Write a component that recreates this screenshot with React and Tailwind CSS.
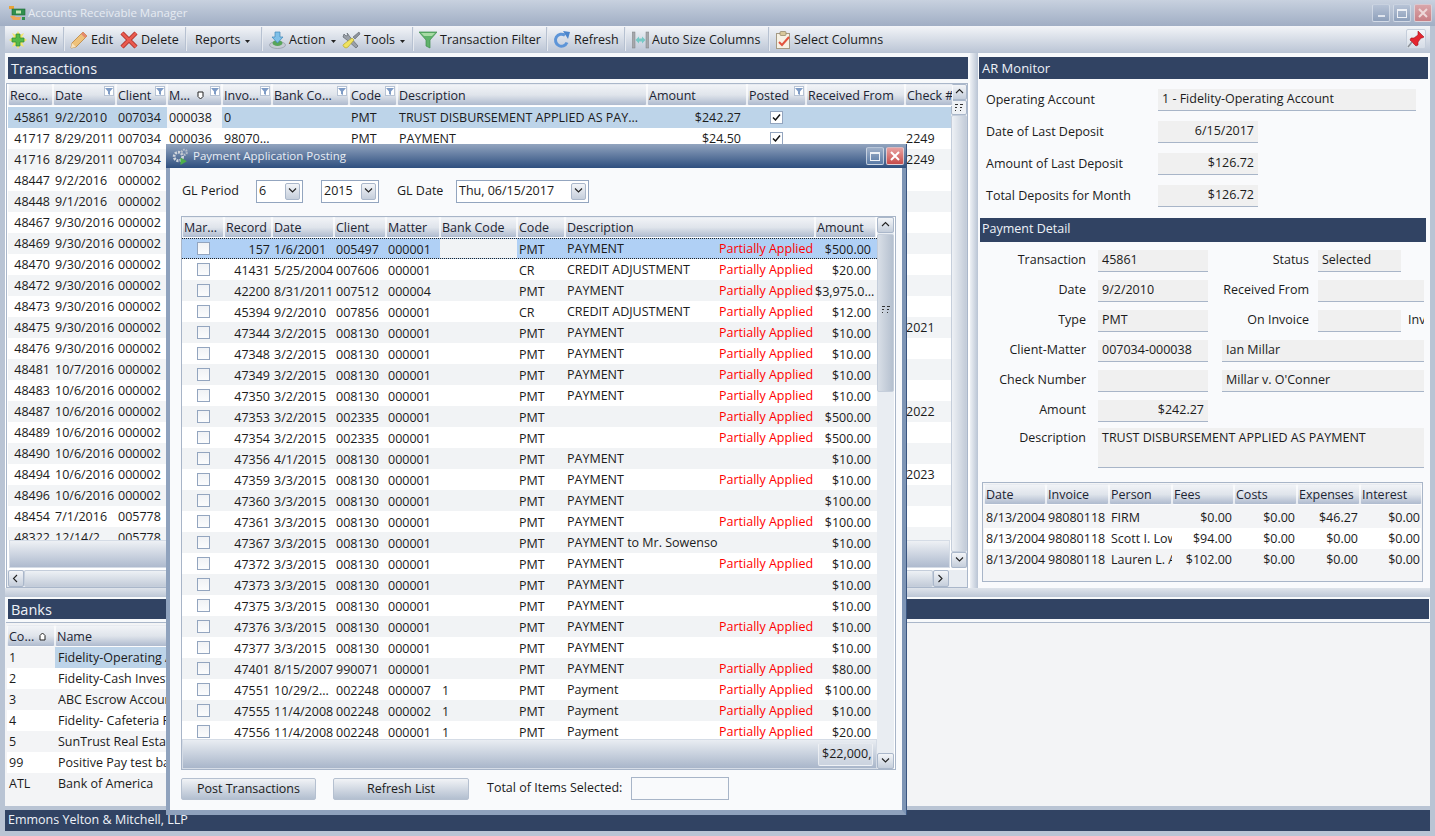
import React from 'react';

const mainCols = 'grid-cols-[45px_63px_51px_55px_50px_77px_48px_250px_100px_59px_99px_48px]';
const modalCols = 'grid-cols-[42px_48px_62px_52px_54px_77px_48px_152px_98px_61px]';
const bankCols = 'grid-cols-[48px_1fr]';
const subCols = 'grid-cols-[62px_63px_63px_62px_63px_63px_62px]';

const headCell = 'h-full flex items-center px-[1px] pt-[2px] rounded-[2px] border border-white/70 bg-linear-to-b from-[#f1f3f7] via-[#dfe4eb] to-[#aebace] text-[#1c2433] overflow-hidden whitespace-nowrap relative';

function FilterMark() {
  return (
    <span className="absolute right-[1px] top-[1px] w-[10px] h-[10px] bg-white border border-[#b7c3d4] flex items-center justify-center">
      <svg width="8" height="8" viewBox="0 0 8 8"><path d="M0 1h8L5 4.5V8L3 7V4.5z" fill="#7f9cc6" /></svg>
    </span>
  );
}

function SortMark() {
  return (
    <svg width="7" height="9" viewBox="0 0 7 9" className="absolute right-[17px] top-[6px]">
      <path d="M1 1h5v4.5L3.5 8 1 5.5z" fill="#fff" stroke="#222" strokeWidth="1" />
    </svg>
  );
}

function SortUp({ className }) {
  return (
    <svg width="7" height="9" viewBox="0 0 7 9" className={className}>
      <path d="M1 8V3.5L3.5 1 6 3.5V8z" fill="#fff" stroke="#222" strokeWidth="1" />
    </svg>
  );
}

function Check({ on }) {
  return (
    <span className={`w-[13px] h-[13px] border border-[#93a5bf] flex items-center justify-center ${on ? 'bg-white' : 'bg-linear-to-b from-[#f0f2f5] to-[#fbfcfd]'}`}>
      {on && <svg width="9" height="9" viewBox="0 0 9 9"><path d="M1 4.5 3.5 7 8 1.5" fill="none" stroke="#111" strokeWidth="1.5" /></svg>}
    </span>
  );
}

function Grip() {
  return (
    <svg width="8" height="7" viewBox="0 0 8 7"><path d="M0 0h3v1H0zM5 0h3v1H5zM0 3h2v1H0zM5 3h2v1H5zM0 6h1v1H0zM5 6h1v1H5z" fill="#333" /></svg>
  );
}

function ScrollBtn({ dir, className = '' }) {
  const d = { up: 'M1 5l3.5-3.5L8 5', down: 'M1 1.5L4.5 5 8 1.5', left: 'M5 1L1.5 4.5 5 8', right: 'M1.5 1L5 4.5 1.5 8' }[dir];
  return (
    <span className={`flex items-center justify-center rounded-[2px] border border-[#aab7ca] bg-linear-to-b from-[#f3f5f8] to-[#c5cedb] shrink-0 ${className}`}>
      <svg width="9" height="9" viewBox="0 0 9 9"><path d={d} fill="none" stroke="#222" strokeWidth="1.1" /></svg>
    </span>
  );
}

function Caret() {
  return <svg width="5" height="3" viewBox="0 0 5 3" className="ml-[5px] mt-[1px]"><path d="M0 0h5L2.5 3z" fill="#222" /></svg>;
}

function ToolSep() {
  return <span className="w-[2px] h-[24px] -mt-[3px] bg-linear-to-r from-[#9fadc2] to-white shrink-0" />;
}

function IconNew() {
  return (
    <svg width="18" height="18" viewBox="0 0 18 18" className="-mt-[2px]">
      <path d="M9 0l2 4 4-2-2 4 5 3-5 3 2 4-4-2-2 4-2-4-4 2 2-4-5-3 5-3-2-4 4 2z" fill="#f4e66a" />
      <path d="M7 3h4v4h4v4h-4v4H7v-4H3V7h4z" fill="#54b948" stroke="#2f8a36" strokeWidth=".7" />
    </svg>
  );
}
function IconEdit() {
  return (
    <svg width="18" height="18" viewBox="0 0 18 18" className="-mt-[2px]">
      <path d="M13 1l4 4L6 16l-5 1 1-5z" fill="#efc27a" stroke="#b9843d" strokeWidth=".8" />
      <path d="M13 1l4 4-2 2-4-4z" fill="#e58a6e" />
      <path d="M2 12l4 4-5 1z" fill="#f8e3c0" />
    </svg>
  );
}
function IconDelete() {
  return (
    <svg width="18" height="18" viewBox="0 0 18 18" className="-mt-[2px]">
      <path d="M2 2l14 14M16 2L2 16" stroke="#a8302a" strokeWidth="4.4" />
      <path d="M2 2l14 14M16 2L2 16" stroke="#ea5a4e" strokeWidth="2.8" />
    </svg>
  );
}
function IconAction() {
  return (
    <svg width="17" height="18" viewBox="0 0 17 18" className="-mt-[2px]">
      <ellipse cx="8.5" cy="14" rx="8" ry="3.5" fill="#c6ccd4" stroke="#8f98a5" strokeWidth=".7" />
      <ellipse cx="8.5" cy="12" rx="5" ry="3" fill="#58a55a" />
      <path d="M6 1h5v5h3l-5.5 6L3 6h3z" fill="#7fc0e8" stroke="#3f86b8" strokeWidth=".7" />
    </svg>
  );
}
function IconTools() {
  return (
    <svg width="19" height="18" viewBox="0 0 19 18" className="-mt-[2px]">
      <path d="M5 2l3 4 8 9-2 2-9-8-4-3 1-3 2 2 2-1z" fill="#9aa0a8" stroke="#5f656d" strokeWidth=".7" />
      <path d="M17 1l1 2-5 5-2-2z" fill="#8d939b" stroke="#5f656d" strokeWidth=".6" />
      <path d="M10 7l2 2-6 7q-2 2-4 0t0-3z" fill="#f0e25f" stroke="#b5a82c" strokeWidth=".7" />
    </svg>
  );
}
function IconFilter() {
  return (
    <svg width="18" height="18" viewBox="0 0 18 18" className="-mt-[2px]">
      <path d="M0 1h18l-7 8v8l-4-2V9z" fill="#5fb26b" stroke="#3f8c4d" strokeWidth=".7" />
      <path d="M2 2h14l-3 3H5z" fill="#a8dba5" />
    </svg>
  );
}
function IconRefresh() {
  return (
    <svg width="18" height="18" viewBox="0 0 18 18" className="-mt-[2px]">
      <path d="M14 11.5A6 6 0 1 1 12 4.3" fill="none" stroke="#5d95d8" strokeWidth="3" />
      <path d="M10 0l7 1-2 7z" fill="#4d86cc" />
    </svg>
  );
}
function IconAuto() {
  return (
    <svg width="17" height="18" viewBox="0 0 17 18" className="-mt-[2px]">
      <rect x="0" y="1" width="3" height="16" fill="#a6a8ac" stroke="#7d8085" strokeWidth=".5" />
      <rect x="14" y="1" width="3" height="16" fill="#a6a8ac" stroke="#7d8085" strokeWidth=".5" />
      <path d="M3.5 9L7 5.5v2h3v-2L13.5 9 10 12.5v-2H7v2z" fill="#76c9c6" />
    </svg>
  );
}
function IconColumns() {
  return (
    <svg width="15" height="18" viewBox="0 0 15 18" className="-mt-[2px]">
      <rect x=".5" y="2.5" width="13" height="15" fill="#f6f1e4" stroke="#a59a84" />
      <rect x="4" y="0.5" width="6" height="4" rx="1" fill="#d8c89a" stroke="#8f8364" strokeWidth=".7" />
      <path d="M3 11l3 3 7-8" fill="none" stroke="#e2543f" strokeWidth="2" />
    </svg>
  );
}
function IconPin() {
  return (
    <svg width="18" height="18" viewBox="0 0 18 18">
      <path d="M11 1l6 6-2 1-1 0-3 4 0 3-2 1-6-6 1-2 3 0 4-3 0-1z" fill="#e4252f" stroke="#a11119" strokeWidth=".6" />
      <path d="M5 12l-4 5" stroke="#8a8f96" strokeWidth="1.4" />
    </svg>
  );
}
function IconApp() {
  return (
    <svg width="18" height="18" viewBox="0 0 18 18">
      <rect x="1" y="2" width="5" height="3" fill="#e8a33a" />
      <rect x="4" y="5" width="13" height="6" fill="#2f8f4e" stroke="#1c6a35" strokeWidth=".6" />
      <rect x="8" y="6.5" width="5" height="3" fill="#c4e4b0" />
      <path d="M2 12q4-1 6 1l5 0-1 3H5z" fill="#eea75a" />
      <rect x="14" y="13" width="3" height="3" fill="#2f8f4e" />
    </svg>
  );
}
function IconGears() {
  return (
    <svg width="17" height="17" viewBox="0 0 16 16">
      <circle cx="6" cy="8" r="4" fill="none" stroke="#cfd4dc" strokeWidth="2.6" strokeDasharray="2 1" />
      <circle cx="11.5" cy="4" r="2.4" fill="none" stroke="#b9c0cb" strokeWidth="2" strokeDasharray="1.5 1" />
      <path d="M8 9l6 3.5L8 16z" fill="#4eb04a" />
    </svg>
  );
}

function ToolBtn({ icon, children, caret, className = '' }) {
  return (
    <span className={`flex items-center h-full whitespace-nowrap ${className}`}>
      {icon}
      <span className={icon ? 'ml-[3px]' : ''}>{children}</span>
      {caret && <Caret />}
    </span>
  );
}

function WinBtn({ kind, active }) {
  const close = kind === 'close';
  const tone = close
    ? active ? 'from-[#e8a0a0] to-[#c64a4a]' : 'from-[#d9a6aa] to-[#c87f85]'
    : active ? 'from-[#9fb0c8] to-[#5b7ba6]' : 'from-[#b7c3d6] to-[#8ea0bb]';
  return (
    <span className={`w-[18px] h-[18px] rounded-[2px] border border-[#dfe5ee]/70 bg-linear-to-b ${tone} flex items-center justify-center`}>
      {kind === 'min' && <span className="w-[7px] h-[2px] mt-[6px] bg-[#dfe5ee]" />}
      {kind === 'max' && <span className="w-[10px] h-[9px] border border-[#eef1f6] border-t-2" />}
      {close && (
        <svg width="10" height="10" viewBox="0 0 10 10"><path d="M1 1l8 8M9 1L1 9" stroke={active ? '#fff' : '#eed9da'} strokeWidth="2" /></svg>
      )}
    </span>
  );
}

function Band({ children, className = '' }) {
  return <div className={`bg-[#314363] text-[#eef2f8] flex items-center whitespace-nowrap ${className}`}>{children}</div>;
}

const txRows = [
  ['41717', '8/29/2011', '007034', '000036', '98070...', '', 'PMT', 'PAYMENT', '$24.50', true, '', '2249'],
  ['41716', '8/29/2011', '007034', '', '', '', '', '', '', false, '', '2249'],
  ['48447', '9/2/2016', '000002'], ['48448', '9/1/2016', '000002'], ['48467', '9/30/2016', '000002'],
  ['48469', '9/30/2016', '000002'], ['48470', '9/30/2016', '000002'], ['48472', '9/30/2016', '000002'],
  ['48473', '9/30/2016', '000002'],
  ['48475', '9/30/2016', '000002', '', '', '', '', '', '', false, '', '2021'],
  ['48476', '9/30/2016', '000002'], ['48481', '10/7/2016', '000002'], ['48483', '10/6/2016', '000002'],
  ['48487', '10/6/2016', '000002', '', '', '', '', '', '', false, '', '2022'],
  ['48489', '10/6/2016', '000002'], ['48490', '10/6/2016', '000002'],
  ['48494', '10/6/2016', '000002', '', '', '', '', '', '', false, '', '2023'],
  ['48496', '10/6/2016', '000002'], ['48454', '7/1/2016', '005778'], ['48322', '12/14/2', '005778'],
];

const P = 'Partially Applied';
const payRows = [
  ['41431', '5/25/2004', '007606', '000001', '', 'CR', 'CREDIT ADJUSTMENT', P, '$20.00'],
  ['42200', '8/31/2011', '007512', '000004', '', 'PMT', 'PAYMENT', P, '$3,975.0...'],
  ['45394', '9/2/2010', '007856', '000001', '', 'CR', 'CREDIT ADJUSTMENT', P, '$12.00'],
  ['47344', '3/2/2015', '008130', '000001', '', 'PMT', 'PAYMENT', P, '$10.00'],
  ['47348', '3/2/2015', '008130', '000001', '', 'PMT', 'PAYMENT', P, '$10.00'],
  ['47349', '3/2/2015', '008130', '000001', '', 'PMT', 'PAYMENT', P, '$10.00'],
  ['47350', '3/2/2015', '008130', '000001', '', 'PMT', 'PAYMENT', P, '$10.00'],
  ['47353', '3/2/2015', '002335', '000001', '', 'PMT', '', P, '$500.00'],
  ['47354', '3/2/2015', '002335', '000001', '', 'PMT', '', P, '$500.00'],
  ['47356', '4/1/2015', '008130', '000001', '', 'PMT', 'PAYMENT', '', '$10.00'],
  ['47359', '3/3/2015', '008130', '000001', '', 'PMT', 'PAYMENT', P, '$10.00'],
  ['47360', '3/3/2015', '008130', '000001', '', 'PMT', 'PAYMENT', '', '$100.00'],
  ['47361', '3/3/2015', '008130', '000001', '', 'PMT', 'PAYMENT', P, '$100.00'],
  ['47367', '3/3/2015', '008130', '000001', '', 'PMT', 'PAYMENT to Mr. Sowenso', '', '$10.00'],
  ['47372', '3/3/2015', '008130', '000001', '', 'PMT', 'PAYMENT', P, '$10.00'],
  ['47373', '3/3/2015', '008130', '000001', '', 'PMT', 'PAYMENT', '', '$10.00'],
  ['47375', '3/3/2015', '008130', '000001', '', 'PMT', 'PAYMENT', '', '$10.00'],
  ['47376', '3/3/2015', '008130', '000001', '', 'PMT', 'PAYMENT', P, '$10.00'],
  ['47377', '3/3/2015', '008130', '000001', '', 'PMT', 'PAYMENT', '', '$10.00'],
  ['47401', '8/15/2007', '990071', '000001', '', 'PMT', 'PAYMENT', P, '$80.00'],
  ['47551', '10/29/2...', '002248', '000007', '1', 'PMT', 'Payment', P, '$100.00'],
  ['47555', '11/4/2008', '002248', '000002', '1', 'PMT', 'Payment', P, '$10.00'],
  ['47556', '11/4/2008', '002248', '000001', '1', 'PMT', 'Payment', P, '$20.00'],
];

const banks = [
  ['1', 'Fidelity-Operating Account'], ['2', 'Fidelity-Cash Investment'], ['3', 'ABC Escrow Account'],
  ['4', 'Fidelity- Cafeteria Plan'], ['5', 'SunTrust Real Estate'], ['99', 'Positive Pay test bank'], ['ATL', 'Bank of America'],
];

const subRows = [
  ['8/13/2004', '98080118', 'FIRM', '$0.00', '$0.00', '$46.27', '$0.00'],
  ['8/13/2004', '98080118', 'Scott I. Lowe', '$94.00', '$0.00', '$0.00', '$0.00'],
  ['8/13/2004', '98080118', 'Lauren L. Adams', '$102.00', '$0.00', '$0.00', '$0.00'],
];

function cell(extra = '') {
  return `px-[2px] overflow-hidden whitespace-nowrap ${extra}`;
}

// numbers in the posting grid sit a pixel lower than the description text
function numCell(extra = '') {
  return cell(`pt-[1px] ${extra}`);
}

function TransactionsPanel() {
  const heads = [['Reco...'], ['Date', 1], ['Client', 1], ['M...', 1, 1], ['Invo...', 1], ['Bank Co...', 1], ['Code', 1], ['Description'], ['Amount'], ['Posted', 1], ['Received From'], ['Check #']];
  return (
    <div className="w-[965px] h-full bg-white flex flex-col">
      <div className="pl-[3px] pr-[2px] pt-[4px] pb-[4px] bg-[#f7f9fb]">
        <Band className="h-[22px] pl-[3px] pt-[1px] text-[14.5px]">Transactions</Band>
      </div>
      <div className="flex-1 min-h-0 flex flex-col border border-[#aab7ca] ml-[1px] mr-[2px]">
        <div className="flex flex-1 min-h-0">
          <div className="flex-1 min-w-0 flex flex-col pl-[1px]">
            <div className={`grid ${mainCols} h-[22px] shrink-0 mb-[1px]`}>
              {heads.map(([t, f, s]) => (
                <div key={t} className={headCell}>{t}{s && <SortMark />}{f && <FilterMark />}</div>
              ))}
            </div>
            <div className="flex-1 min-h-0 overflow-hidden">
              <div className={`grid ${mainCols} h-[21px] leading-[21px] bg-[#bdd4e9]`}>
                <div className={cell('text-right pr-[3px]')}>45861</div>
                <div className={cell()}>9/2/2010</div>
                <div className={cell()}>007034</div>
                <div className={cell('bg-[#f3f5f8]')}>000038</div>
                <div className={cell()}>0</div>
                <div />
                <div className={cell()}>PMT</div>
                <div className={cell()}>TRUST DISBURSEMENT APPLIED AS PAY...</div>
                <div className={cell('text-right pr-[6px]')}>$242.27</div>
                <div className="flex items-center justify-center"><Check on /></div>
                <div />
                <div />
              </div>
              {txRows.map((r, i) => (
                <div key={r[0]} className={`grid ${mainCols} h-[21px] leading-[21px] ${i % 2 ? 'bg-[#f2f4f6]' : 'bg-white'}`}>
                  <div className={cell('text-right pr-[3px]')}>{r[0]}</div>
                  <div className={cell()}>{r[1]}</div>
                  <div className={cell()}>{r[2]}</div>
                  <div className={cell()}>{r[3]}</div>
                  <div className={cell()}>{r[4]}</div>
                  <div className={cell()}>{r[5]}</div>
                  <div className={cell()}>{r[6]}</div>
                  <div className={cell()}>{r[7]}</div>
                  <div className={cell('text-right pr-[6px]')}>{r[8]}</div>
                  <div className="flex items-center justify-center">{r[9] && <Check on />}</div>
                  <div />
                  <div className={cell('pl-[1px]')}>{r[11]}</div>
                </div>
              ))}
            </div>
            <div className="h-[28px] shrink-0 mx-[1px] border border-[#d5dce6] bg-linear-to-b from-[#eef1f5] to-[#aebace]" />
          </div>
          <div className="w-[16px] shrink-0 flex flex-col bg-[#e9edf2]">
            <ScrollBtn dir="up" className="h-[16px]" />
            <span className="h-[15px] flex items-center justify-center rounded-[2px] border border-[#aab7ca] bg-[#eef1f5]"><Grip /></span>
            <span className="flex-1 rounded-[2px] border border-[#c5cedb] bg-linear-to-r from-[#eef1f5] to-[#c3ccd9]" />
            <ScrollBtn dir="down" className="h-[16px]" />
          </div>
        </div>
        <div className="h-[17px] shrink-0 flex bg-[#e9edf2] pl-[1px] mt-[2px]">
          <ScrollBtn dir="left" className="w-[16px]" />
          <span className="flex-1 rounded-[2px] border border-[#c5cedb] bg-linear-to-b from-[#eef1f5] to-[#c3ccd9]" />
          <ScrollBtn dir="right" className="w-[16px]" />
          <span className="w-[18px]" />
        </div>
      </div>
    </div>
  );
}

function Field({ children, className = '' }) {
  return <div className={`h-[22px] bg-[#f0f0f0] border-b border-[#a8b5c8] flex items-center px-[4px] overflow-hidden whitespace-nowrap ${className}`}>{children}</div>;
}

function Label({ children, className = '' }) {
  return <div className={`text-right whitespace-nowrap -mt-[2px] ${className}`}>{children}</div>;
}

function RightPanel() {
  return (
    <div className="w-[452px] h-full bg-[#f9fafc] flex flex-col">
      <div className="pt-[4px] pl-[1px] pr-[2px]">
        <Band className="h-[22px] pl-[3px] pt-[1px] text-[13px]">AR Monitor</Band>
      </div>
      <div className="grid grid-cols-[172px_258px] gap-y-[10px] mt-[10px] items-center pl-[8px]">
        <div>Operating Account</div><Field>1 - Fidelity-Operating Account</Field>
        <div>Date of Last Deposit</div><Field className="w-[100px] justify-end">6/15/2017</Field>
        <div>Amount of Last Deposit</div><Field className="w-[100px] justify-end">$126.72</Field>
        <div>Total Deposits for Month</div><Field className="w-[100px] justify-end">$126.72</Field>
      </div>
      <Band className="h-[24px] mt-[11px] ml-[2px] mr-[4px] pl-[2px] pb-[1px]">Payment Detail</Band>
      <div className="grid grid-cols-[110px_110px_90px_83px_23px] gap-x-[10px] mt-[8px] items-center">
        <Label className="pr-[2px]">Transaction</Label><Field className="pb-[1px]">45861</Field><Label className="-mr-[1px]">Status</Label><Field className="pb-[1px]">Selected</Field><div />
      </div>
      <div className="grid grid-cols-[110px_110px_90px_106px] gap-x-[10px] mt-[8px] items-center">
        <Label className="pr-[2px]">Date</Label><Field className="pb-[1px]">9/2/2010</Field><Label className="-mr-[1px]">Received From</Label><Field />
      </div>
      <div className="grid grid-cols-[110px_110px_90px_83px_23px] gap-x-[10px] mt-[8px] items-center">
        <Label className="pr-[2px]">Type</Label><Field className="pb-[1px]">PMT</Field><Label className="-mr-[1px]">On Invoice</Label><Field />
        <div className="-ml-[3px] w-[16px] overflow-hidden -mt-[2px]">Inv</div>
      </div>
      <div className="grid grid-cols-[110px_110px_206px] gap-x-[10px] mt-[8px] items-center">
        <Label className="pr-[2px]">Client-Matter</Label><Field className="pb-[1px]">007034-000038</Field><Field className="ml-[4px] pb-[1px]">Ian Millar</Field>
      </div>
      <div className="grid grid-cols-[110px_110px_206px] gap-x-[10px] mt-[8px] items-center">
        <Label className="pr-[2px]">Check Number</Label><Field /><Field className="ml-[4px] pb-[1px]">Millar v. O'Conner</Field>
      </div>
      <div className="grid grid-cols-[110px_110px] gap-x-[10px] mt-[8px] items-center">
        <Label className="pr-[2px]">Amount</Label><Field className="justify-end pb-[1px]">$242.27</Field>
      </div>
      <div className="grid grid-cols-[110px_326px] gap-x-[10px] mt-[6px]">
        <Label className="pr-[2px] pt-[3px]">Description</Label>
        <div className="h-[40px] bg-[#f0f0f0] border-b border-[#a8b5c8] px-[4px] pt-[1px] whitespace-nowrap">TRUST DISBURSEMENT APPLIED AS PAYMENT</div>
      </div>
      <div className="mt-[14px] ml-[4px] w-[441px] h-[100px] border border-[#a8b5c8] bg-[#f3f4f6] p-[1px]">
        <div className={`grid ${subCols} h-[21px] mb-[2px]`}>
          {['Date', 'Invoice', 'Person', 'Fees', 'Costs', 'Expenses', 'Interest'].map((t) => <div key={t} className={headCell}>{t}</div>)}
        </div>
        {subRows.map((r, i) => (
          <div key={r[2]} className={`grid ${subCols} h-[21px] leading-[21px] ${i === 1 ? 'bg-white' : ''}`}>
            <div className={cell('px-0')}>{r[0]}</div>
            <div className={cell()}>{r[1]}</div>
            <div className={cell()}>{r[2]}</div>
            {r.slice(3).map((v, j) => <div key={j} className={cell('text-right')}>{v}</div>)}
          </div>
        ))}
      </div>
    </div>
  );
}

function BanksPanel() {
  return (
    <div className="h-[209px] mx-[5px] flex flex-col bg-[#f3f4f6] shrink-0">
      <div className="bg-[#f7f9fb] pt-[2px] pb-[3px] pl-[3px] pr-[1px]">
        <Band className="h-[20px] pl-[3px] pt-[1px] text-[14.5px]">Banks</Band>
      </div>
      <div className="flex-1 border-t border-[#aab7ca] ml-[1px] pt-[2px]">
        <div className={`grid ${bankCols} h-[22px] w-[896px] ml-[1px]`}>
          <div className={headCell}>Co...<SortUp className="absolute right-[8px] top-[6px]" /></div>
          <div className={headCell}>Name</div>
        </div>
        {banks.map((b, i) => (
          <div key={b[0]} className={`grid ${bankCols} h-[21px] leading-[21px] w-[896px] ml-[1px] ${i % 2 ? 'bg-white' : 'bg-[#f3f4f6]'}`}>
            <div className={cell()}>{b[0]}</div>
            <div className={cell('pl-[3px] ' + (i === 0 ? 'bg-[#bdd4e9]' : ''))}>{b[1]}</div>
          </div>
        ))}
      </div>
    </div>
  );
}

function Combo({ children, className = '' }) {
  return (
    <div className={`h-[23px] border border-[#93a5bf] bg-white flex items-center justify-between pl-[2px] pr-[2px] whitespace-nowrap ${className}`}>
      <span className="-mt-[1px]">{children}</span>
      <ScrollBtn dir="down" className="w-[15px] h-[17px]" />
    </div>
  );
}

function PushBtn({ children, className = '' }) {
  return <div className={`h-[22px] pt-[1px] rounded-[2px] border border-[#b5c0d0] bg-linear-to-b from-[#f1f3f6] to-[#b3bfd0] flex items-center justify-center ${className}`}>{children}</div>;
}

function PaymentModal() {
  const heads = ['Mar...', 'Record', 'Date', 'Client', 'Matter', 'Bank Code', 'Code'];
  return (
    <div className="absolute left-[166px] top-[144px] w-[740px] h-[671px] flex flex-col border-x-[4px] border-b-[5px] border-[#8fa2bd] border-r-[#7e95b5] shadow-[1px_0_0_#3a5580]">
      <div className="-mx-[4px] h-[24px] shrink-0 bg-linear-to-b from-[#93a5bf] to-[#2f4f7f] flex items-center pl-[6px] pr-[2px] text-[11.5px] text-[#e8edf4] whitespace-nowrap">
        <IconGears />
        <span className="ml-[4px] flex-1">Payment Application Posting</span>
        <span className="flex gap-[2px]"><WinBtn kind="max" active /><WinBtn kind="close" active /></span>
      </div>
      <div className="flex-1 min-h-0 bg-[#f9fafc] flex flex-col px-[11px]">
        <div className="flex items-center h-[23px] mt-[12px] shrink-0">
          <span className="w-[75px] pl-[1px]">GL Period</span>
          <Combo className="w-[47px]">6</Combo>
          <Combo className="w-[58px] ml-[18px]">2015</Combo>
          <span className="ml-[18px] w-[59px]">GL Date</span>
          <Combo className="w-[133px]">Thu, 06/15/2017</Combo>
        </div>
        <div className="mt-[13px] w-[715px] h-[554px] shrink-0 border border-[#a8b5c8] flex bg-white">
          <div className="w-[696px] flex flex-col">
            <div className={`grid ${modalCols} h-[21px] shrink-0`}>
              {heads.map((t) => <div key={t} className={headCell}>{t}</div>)}
              <div className={`${headCell} col-span-2`}>Description</div>
              <div className={headCell}>Amount</div>
            </div>
            <div className="flex-1 min-h-0 overflow-hidden">
              <div className={`grid ${modalCols} h-[21px] leading-[19px] border-y border-dotted border-[#222] bg-[#b0d0f5]`}>
                <div className="flex items-center justify-center"><Check /></div>
                <div className={numCell('text-right')}>157</div>
                <div className={numCell()}>1/6/2001</div>
                <div className={numCell()}>005497</div>
                <div className={numCell()}>000001</div>
                <div className="bg-[#f1f3f5]" />
                <div className={numCell()}>PMT</div>
                <div className={cell()}>PAYMENT</div>
                <div className={cell('text-right text-[#f00] pr-[2px]')}>{P}</div>
                <div className={numCell('text-right pr-[5px]')}>$500.00</div>
              </div>
              {payRows.map((r, i) => (
                <div key={r[0]} className={`grid ${modalCols} h-[21px] leading-[21px] ${i % 2 ? 'bg-[#f1f3f5]' : 'bg-white'}`}>
                  <div className="flex items-center justify-center"><Check /></div>
                  <div className={numCell('text-right')}>{r[0]}</div>
                  <div className={numCell()}>{r[1]}</div>
                  <div className={numCell()}>{r[2]}</div>
                  <div className={numCell()}>{r[3]}</div>
                  <div className={numCell()}>{r[4]}</div>
                  <div className={numCell()}>{r[5]}</div>
                  <div className="px-[2px] whitespace-nowrap">{r[6]}</div>
                  <div className={cell('text-right text-[#f00] pr-[2px]')}>{r[7]}</div>
                  <div className={numCell(r[8].length > 8 ? 'pr-0 pl-0 text-left' : 'text-right pr-[5px]')}>{r[8]}</div>
                </div>
              ))}
            </div>
            <div className="h-[30px] shrink-0 border border-[#d5dce6] bg-linear-to-b from-[#e9edf2] to-[#a9b6ca] flex items-center justify-end pr-[3px]">
              <span className="h-[23px] w-[55px] flex items-center pl-[3px] rounded-[2px] border border-white/50 bg-linear-to-b from-[#dfe4eb] to-[#cbd3df] overflow-hidden whitespace-nowrap">$22,000,</span>
            </div>
          </div>
          <div className="w-[17px] flex flex-col bg-[#e9edf2] mr-[1px]">
            <ScrollBtn dir="up" className="h-[16px]" />
            <span className="h-[158px] rounded-[2px] border border-[#c5cedb] bg-linear-to-r from-[#d9dfe7] to-[#b5c0cf] flex items-center justify-center mt-[1px]"><span className="mt-[-8px]"><Grip /></span></span>
            <span className="flex-1" />
            <ScrollBtn dir="down" className="h-[16px]" />
          </div>
        </div>
        <div className="flex items-center mt-[7px] shrink-0">
          <PushBtn className="w-[135px]">Post Transactions</PushBtn>
          <PushBtn className="w-[136px] ml-[17px]">Refresh List</PushBtn>
          <span className="ml-[18px] w-[144px] whitespace-nowrap">Total of Items Selected:</span>
          <span className="w-[98px] h-[23px] border border-[#a8b5c8] bg-[#f9fafc]" />
        </div>
      </div>
    </div>
  );
}

export default function App() {
  return (
    <div className="relative w-[1435px] h-[836px] overflow-hidden flex flex-col bg-[#b9c4d4] text-[12.5px] text-[#1b1b1b] font-['Open_Sans','Noto_Sans',sans-serif]">
      <div className="h-[26px] shrink-0 bg-linear-to-b from-[#c8d1df] to-[#a0aec4] flex items-center pl-[8px] pr-[3px]">
        <IconApp />
        <span className="ml-[2px] flex-1 text-[11.5px] text-[#e6ebf2]">Accounts Receivable Manager</span>
        <span className="flex gap-[3px]"><WinBtn kind="min" /><WinBtn kind="max" /><WinBtn kind="close" /></span>
      </div>
      <div className="h-[26px] shrink-0 mx-[5px] pt-[3px] bg-linear-to-b from-[#f3f5f8] to-[#bcc6d6] flex items-center pl-[4px] pr-[4px]">
        <ToolBtn icon={<IconNew />} className="w-[54px]"><span className="ml-[1px]">New</span></ToolBtn>
        <ToolSep />
        <ToolBtn icon={<IconEdit />} className="w-[50px] ml-[5px]">Edit</ToolBtn>
        <ToolBtn icon={<IconDelete />} className="w-[65px]">Delete</ToolBtn>
        <ToolSep />
        <ToolBtn caret className="w-[66px] ml-[8px]">Reports</ToolBtn>
        <ToolSep />
        <ToolBtn icon={<IconAction />} caret className="w-[73px] ml-[6px]">Action</ToolBtn>
        <ToolBtn icon={<IconTools />} caret className="w-[70px]">Tools</ToolBtn>
        <ToolSep />
        <ToolBtn icon={<IconFilter />} className="w-[127px] ml-[5px]">Transaction Filter</ToolBtn>
        <ToolSep />
        <ToolBtn icon={<IconRefresh />} className="w-[71px] ml-[5px]">Refresh</ToolBtn>
        <ToolSep />
        <ToolBtn icon={<IconAuto />} className="w-[136px] ml-[6px]">Auto Size Columns</ToolBtn>
        <ToolSep />
        <ToolBtn icon={<IconColumns />} className="ml-[6px] flex-1">Select Columns</ToolBtn>
        <span className="w-[20px] h-[20px] -mt-[3px] rounded-[2px] border border-[#c5cedb] bg-linear-to-b from-[#f3f5f8] to-[#d5dce6] flex items-center justify-center"><IconPin /></span>
      </div>
      <div className="h-[535px] shrink-0 mt-[1px] mx-[5px] flex">
        <TransactionsPanel />
        <div className="w-[8px] shrink-0 bg-linear-to-r from-[#eef1f5] to-[#b9c4d4]" />
        <RightPanel />
      </div>
      <div className="h-[9px] shrink-0 mx-[5px] bg-linear-to-b from-[#dfe4eb] to-[#bcc6d6]" />
      <BanksPanel />
      <Band className="h-[21px] shrink-0 mt-[4px] mx-[5px] pl-[3px]">Emmons Yelton &amp; Mitchell, LLP</Band>
      <PaymentModal />
    </div>
  );
}
